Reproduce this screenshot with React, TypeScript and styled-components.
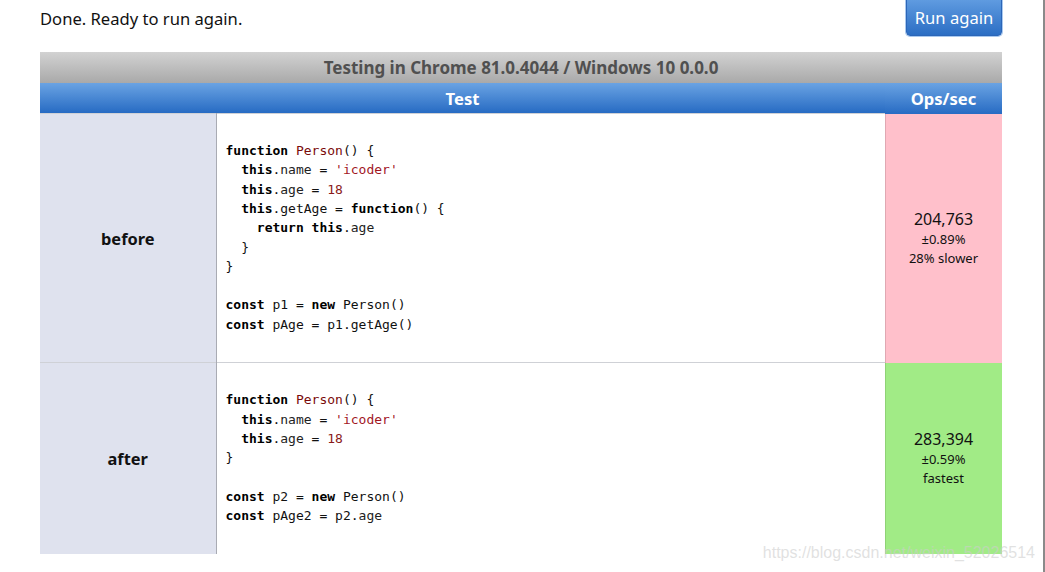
import { FC, ReactNode } from "react";
import styled, { createGlobalStyle } from "styled-components";

const GlobalStyle = createGlobalStyle`
  html, body {
    margin: 0;
    padding: 0;
    background: #ffffff;
  }
  body {
    font-family: "Noto Sans", "Open Sans", sans-serif;
    color: #111;
  }
`;

const Page = styled.div`
  position: relative;
  width: 1045px;
  height: 572px;
  padding-left: 40px;
  box-sizing: border-box;
  overflow: hidden;
`;

const TopBar = styled.div`
  display: flex;
  justify-content: space-between;
  align-items: flex-start;
  width: 962px;
  height: 52px;
`;

const Status = styled.div`
  font-size: 16.6px;
  line-height: 20px;
  padding-top: 9px;
`;

const RunButton = styled.button`
  width: 96px;
  height: 37px;
  margin-top: -1px;
  border: 1px solid #2c66b8;
  border-radius: 0 0 4px 4px;
  background: linear-gradient(#5f9be0, #2c6ec4);
  box-shadow: 0 0 0 1px #a9c9ef;
  color: #fff;
  font-family: inherit;
  font-size: 16.6px;
  padding: 0;
  cursor: pointer;
`;

const Table = styled.table`
  width: 962px;
  border-collapse: collapse;
  table-layout: fixed;
`;

const CaptionRow = styled.th`
  height: 31px;
  padding: 0;
  background: linear-gradient(#d2d2d2, #a9a9a9);
  color: #505050;
  font-size: 17px;
  font-weight: bold;
`;

const HeadCell = styled.th`
  height: 30px;
  padding: 0;
  background: linear-gradient(#6aa3e3, #276bc3);
  color: #fff;
  font-size: 16.6px;
  font-weight: bold;
`;

const TitleCell = styled.td`
  background: #dfe2ee;
  border-right: 1px solid #a9abb3;
  border-top: 1px solid #cfd1d6;
  text-align: center;
  font-size: 16.4px;
  font-weight: bold;
  padding: 0;
`;

const CodeCell = styled.td`
  background: #fff;
  border-top: 1px solid #cfd1d6;
  padding: 27px 9px 28px;
  vertical-align: middle;
`;

const OpsCell = styled.td<{ $tone: "slow" | "fast" }>`
  background: ${({ $tone }) => ($tone === "slow" ? "#ffc0cb" : "#a1eb86")};
  box-shadow: inset 1px 0 0 ${({ $tone }) => ($tone === "slow" ? "#e0a8b2" : "#8fd276")};
  text-align: center;
  padding: 0;
  font-size: 13px;
  line-height: 19px;
`;

const OpsValue = styled.div`
  font-size: 16px;
  line-height: 22px;
`;

const Code = styled.pre`
  margin: 0;
  font-family: "DejaVu Sans Mono", "Liberation Mono", monospace;
  font-size: 13px;
  line-height: 19.3px;
  color: #111;
`;

const Kw = styled.b`
  font-weight: bold;
  color: #000;
`;

const Def = styled.span<{ $kind: "name" | "str" | "num" }>`
  color: ${({ $kind }) =>
    $kind === "name" ? "#7a0a0a" : $kind === "str" ? "#a1161f" : "#8a1a1a"};
`;

const Prop = styled.span`
  color: #222;
`;

const Watermark = styled.div`
  position: absolute;
  right: 10px;
  bottom: 10px;
  font-family: "Liberation Sans", Arial, sans-serif;
  font-size: 16px;
  color: rgba(205, 205, 205, 0.6);
`;

const EdgeLine = styled.div`
  position: absolute;
  right: 0;
  top: 0;
  bottom: 0;
  width: 2px;
  background: #8a8a8a;
`;

type TestRowProps = {
  title: string;
  code: ReactNode;
  ops: string;
  rme: string;
  note: string;
  tone: "slow" | "fast";
  height: number;
};

const TestRow: FC<TestRowProps> = ({ title, code, ops, rme, note, tone, height }) => (
  <tr style={{ height }}>
    <TitleCell>{title}</TitleCell>
    <CodeCell>
      <Code>{code}</Code>
    </CodeCell>
    <OpsCell $tone={tone}>
      <OpsValue>{ops}</OpsValue>
      <div>{rme}</div>
      <div>{note}</div>
    </OpsCell>
  </tr>
);

const beforeCode = (
  <>
    <Kw>function</Kw> <Def $kind="name">Person</Def>() {"{\n"}
    {"  "}<Kw>this</Kw>.<Prop>name</Prop> = <Def $kind="str">'icoder'</Def>{"\n"}
    {"  "}<Kw>this</Kw>.<Prop>age</Prop> = <Def $kind="num">18</Def>{"\n"}
    {"  "}<Kw>this</Kw>.getAge = <Kw>function</Kw>() {"{\n"}
    {"    "}<Kw>return</Kw> <Kw>this</Kw>.<Prop>age</Prop>{"\n"}
    {"  }\n"}
    {"}\n\n"}
    <Kw>const</Kw> p1 = <Kw>new</Kw> Person(){"\n"}
    <Kw>const</Kw> pAge = p1.getAge()
  </>
);

const afterCode = (
  <>
    <Kw>function</Kw> <Def $kind="name">Person</Def>() {"{\n"}
    {"  "}<Kw>this</Kw>.<Prop>name</Prop> = <Def $kind="str">'icoder'</Def>{"\n"}
    {"  "}<Kw>this</Kw>.<Prop>age</Prop> = <Def $kind="num">18</Def>{"\n"}
    {"}\n\n"}
    <Kw>const</Kw> p2 = <Kw>new</Kw> Person(){"\n"}
    <Kw>const</Kw> pAge2 = p2.<Prop>age</Prop>
  </>
);

const App: FC = () => (
  <Page>
    <GlobalStyle />
    <TopBar>
      <Status>Done. Ready to run again.</Status>
      <RunButton type="button">Run again</RunButton>
    </TopBar>
    <Table>
      <colgroup>
        <col style={{ width: 176 }} />
        <col />
        <col style={{ width: 117 }} />
      </colgroup>
      <thead>
        <tr>
          <CaptionRow colSpan={3}>Testing in Chrome 81.0.4044 / Windows 10 0.0.0</CaptionRow>
        </tr>
        <tr>
          <HeadCell colSpan={2}>Test</HeadCell>
          <HeadCell>Ops/sec</HeadCell>
        </tr>
      </thead>
      <tbody>
        <TestRow
          title="before"
          code={beforeCode}
          ops="204,763"
          rme="±0.89%"
          note="28% slower"
          tone="slow"
          height={249}
        />
        <TestRow
          title="after"
          code={afterCode}
          ops="283,394"
          rme="±0.59%"
          note="fastest"
          tone="fast"
          height={191}
        />
      </tbody>
    </Table>
    <Watermark>https://blog.csdn.net/weixin_52026514</Watermark>
    <EdgeLine />
  </Page>
);

export default App;
